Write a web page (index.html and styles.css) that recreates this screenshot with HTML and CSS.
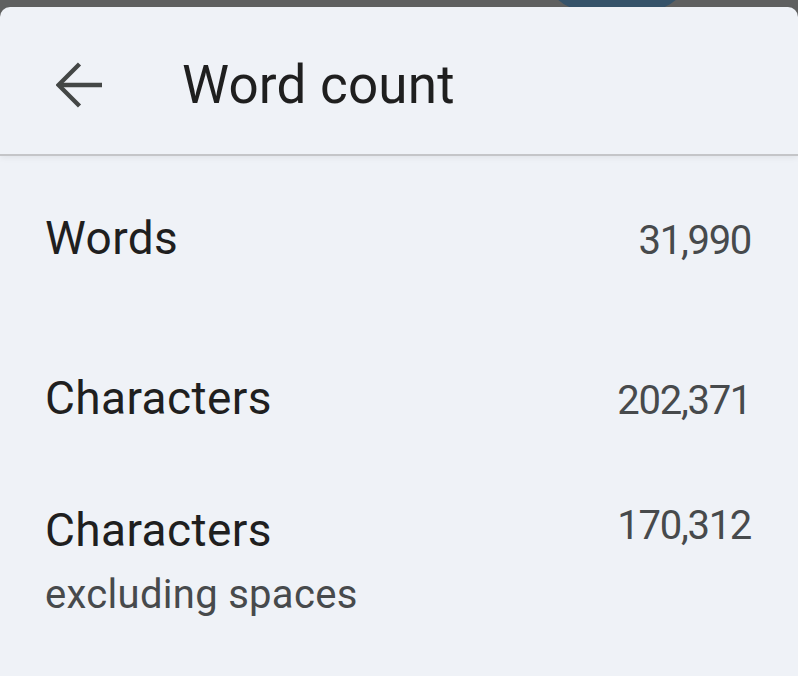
FILE: index.html
```html
<!DOCTYPE html>
<html lang="en">
<head>
    <meta charset="UTF-8">
    <meta name="viewport" content="width=device-width, initial-scale=1.0">
    <title>Word count</title>
    <link rel="stylesheet" href="styles.css">
</head>
<body>
    <div class="status-strip">
        <div class="status-blob"></div>
    </div>

    <div class="sheet">
        <div class="sheet-header">
            <button class="back-btn" aria-label="Back">
                <svg width="46" height="46" viewBox="0 0 46 46" fill="none" stroke="#444746" stroke-width="4.4">
                    <path d="M3 23H46"/>
                    <path d="M23.5 2L2.5 23L23.5 44"/>
                </svg>
            </button>
            <h1 class="sheet-title">Word count</h1>
        </div>

        <div class="stats">
            <div class="stat-row stat-row-first">
                <div class="stat-label">Words</div>
                <div class="stat-value">31,990</div>
            </div>
            <div class="stat-row">
                <div class="stat-label">Characters</div>
                <div class="stat-value">202,371</div>
            </div>
            <div class="stat-row stat-row-top">
                <div class="stat-label">
                    Characters
                    <div class="stat-sub">excluding spaces</div>
                </div>
                <div class="stat-value">170,312</div>
            </div>
        </div>
    </div>
</body>
</html>
```

FILE: styles.css
```css
body {
    margin: 0;
    padding: 0;
    background-color: #5f6060;
    font-family: 'Roboto', 'Noto Sans', sans-serif;
    color: #1f1f1f;
    height: 676px;
    overflow: hidden;
}

.status-strip {
    height: 7px;
    position: relative;
    overflow: hidden;
}

.status-blob {
    position: absolute;
    left: 552px;
    top: -40px;
    width: 130px;
    height: 56px;
    border-radius: 50%;
    background-color: #36536a;
}

.sheet {
    background-color: #eff2f7;
    border-radius: 10px 10px 0 0;
    height: 669px;
}

.sheet-header {
    height: 147px;
    box-sizing: border-box;
    padding: 8px 0 0 56px;
    display: flex;
    align-items: center;
    gap: 80px;
    box-shadow: 0 2px 0 #c4c5c8, 0 4px 6px rgba(0, 0, 0, 0.06);
    position: relative;
}

.back-btn {
    border: none;
    background: none;
    padding: 0;
    width: 46px;
    height: 46px;
    display: flex;
    cursor: pointer;
}

.sheet-title {
    margin: 0;
    font-size: 53px;
    font-weight: 400;
    line-height: 52px;
    letter-spacing: 0.2px;
    color: #1f1f1f;
}

.stats {
    padding: 18px 47px 0 45px;
}

.stat-row {
    display: flex;
    justify-content: space-between;
    align-items: baseline;
    padding: 38px 0;
}

.stat-row-first {
    margin-bottom: 28px;
}

.stat-row-top {
    align-items: flex-start;
}

.stat-label {
    font-size: 46px;
    line-height: 56px;
    letter-spacing: 0.4px;
    color: #1f1f1f;
}

.stat-sub {
    font-size: 40px;
    line-height: 50px;
    margin-top: 12px;
    letter-spacing: 0.3px;
    color: #474a4c;
}

.stat-value {
    font-size: 40px;
    line-height: 48px;
    letter-spacing: -1.3px;
    color: #474a4c;
}
```
